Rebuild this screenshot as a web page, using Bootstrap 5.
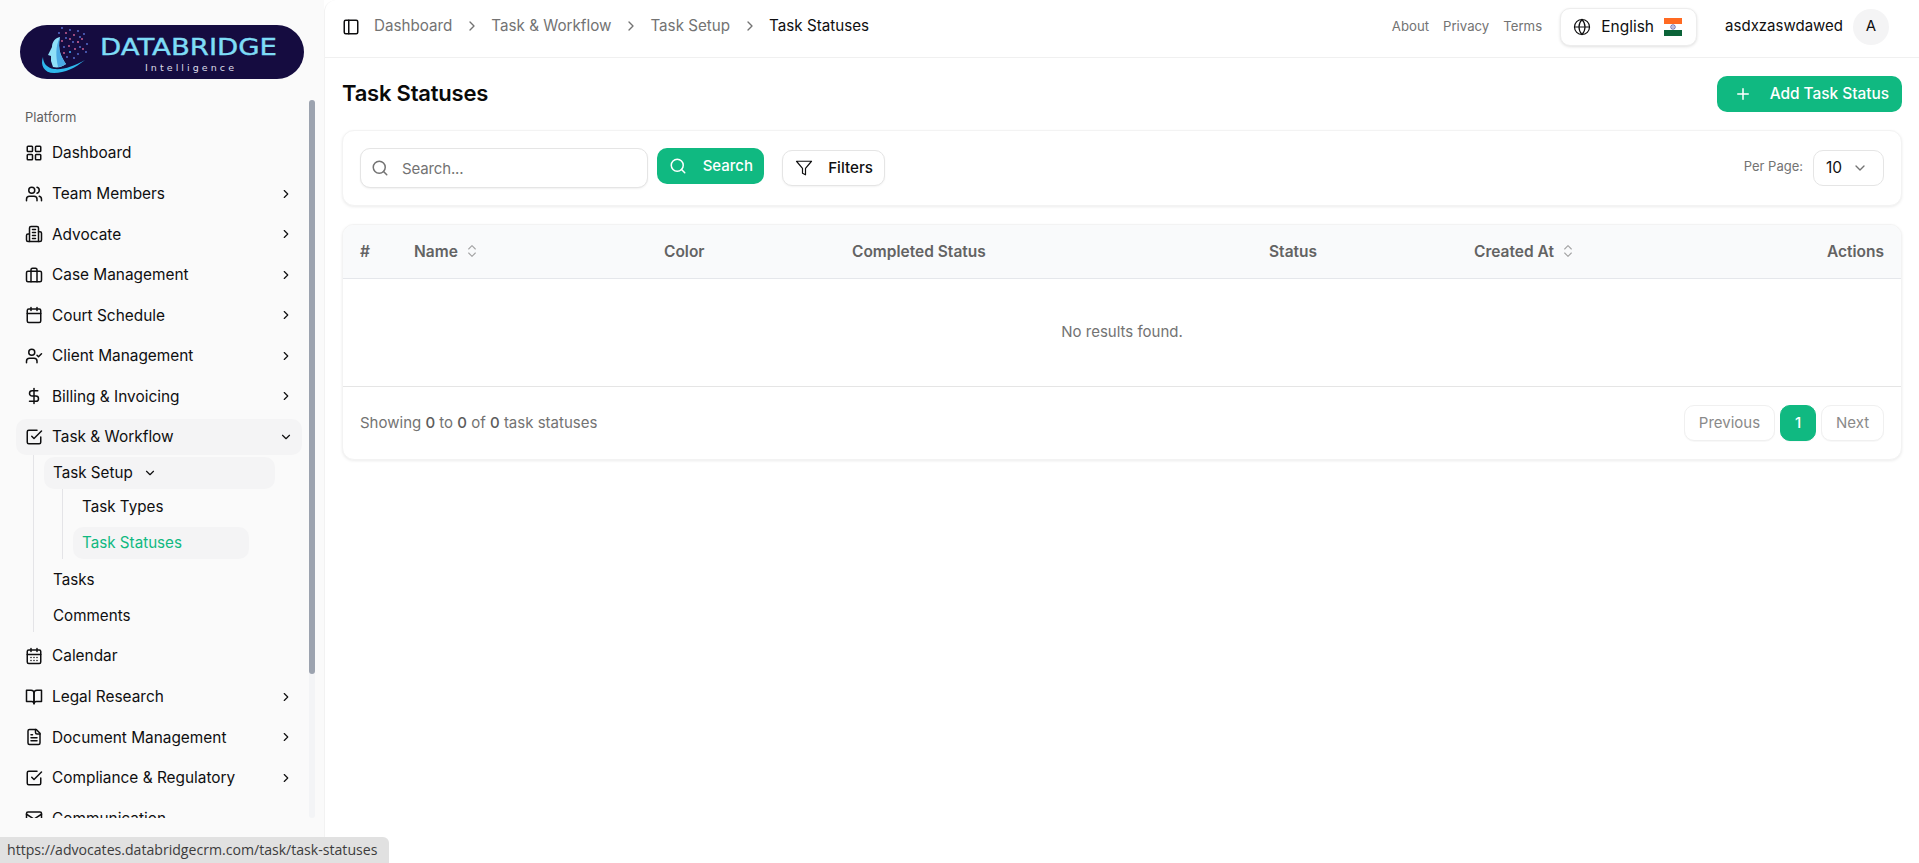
<!doctype html>
<html lang="en">
<head>
<meta charset="utf-8">
<title>Task Statuses</title>
<link href="https://cdn.jsdelivr.net/npm/bootstrap@5.3.0/dist/css/bootstrap.min.css" rel="stylesheet">
<style>
:root{--green:#10b981;--ink:#0f0f10;--mute:#737373;--line:#e8e8e8}
html,body{height:100%;overflow:hidden}
body{font-family:Inter,"Liberation Sans",sans-serif;font-size:15.4px;color:var(--ink);background:#fff}
.ic{width:18px;height:18px;fill:none;stroke:currentColor;stroke-width:2;stroke-linecap:round;stroke-linejoin:round;flex:none}
.ic-sm{width:14px;height:14px}
.ic-md{width:16px;height:16px}
.ic-thin{stroke-width:1.6}
.side{width:324px;height:100vh;background:#fafafa;flex:none}
.logo-wrap{height:100px;padding:25px 20px 0}
.logo-svg{display:block;width:284px;height:54px}
.nav-zone{height:718px;padding-left:16px}
.nav-list{width:286px;overflow:hidden;margin-right:7px}
.plat{font-size:13px;color:#5f5f5f;height:35px;padding:9px 0 0 9px;line-height:17px}
.s-row{height:36px;border-radius:10px;padding:0 9px 0 9px;margin-bottom:4.57px;gap:9px;color:var(--ink);text-decoration:none;cursor:pointer;font-size:15.4px}
.s-row .chev{margin-left:auto}
.s-open{background:#f4f4f5;margin-bottom:0}
.tree{margin:0 0 6px 17px;border-left:1px solid #e4e4e7;padding:2px 0 0 10px;width:242px}
.tree-in{margin:0 0 0 18px;border-left:1px solid #e4e4e7;padding:2px 0 0 10px;width:213px;margin-bottom:5px}
.t-row{height:32px;border-radius:10px;padding:0 9px;color:var(--ink);text-decoration:none;margin-bottom:4px;gap:10px;font-size:15.2px}
.t-open{background:#f4f4f5;width:231px;margin-bottom:0}
.t-act{background:#f4f4f5;color:var(--green);width:176px;margin-bottom:0}
.t-first{margin-bottom:4px}
.t-last{margin-bottom:2px}
.track{width:6px;height:718px;background:#f3f4f6;border-radius:3px}
.thumb{width:6px;height:574px;background:#9ca3af;border-radius:3px}
.main-col{min-width:0;border-left:1px solid #f2f2f2;border-top-left-radius:12px}
.topbar{height:58px;border-bottom:1px solid #f0f0f0;padding:0 30px 4px 17px;font-size:15.2px}
.crumb-wrap{margin-left:14px}
.crumb{color:var(--mute);text-decoration:none}
.crumb-end{color:var(--ink)}
.crumb-sep{color:#737373;margin:0 11.5px}
.tlink{font-size:13.2px;color:var(--mute);text-decoration:none}
.tlinks{gap:14px}
.lang{height:38px;width:137px;background:#fff;border:1px solid #ededed;border-radius:10px;box-shadow:0 1px 3px rgba(0,0,0,.12);padding:0 14px 0 12px;margin:0 28px 0 18px;font-size:15.5px}
.uname{font-size:15px;color:var(--ink)}
.avatar{width:36px;height:36px;border-radius:50%;background:#f4f4f5;font-size:15px;margin-left:10px}
.pane{padding:18px 17px 0 17px}
.ttl{font-size:22px;font-weight:600;margin:0;padding-bottom:2px;letter-spacing:-.01em;color:#0a0a0a}
.btn-g{background:var(--green);border:0;color:#fff;border-radius:10px;font-size:15.4px;font-weight:500;display:inline-flex;align-items:center}
.btn-g:hover{background:var(--green);color:#fff}
.btn-add{height:36px;width:185px;padding:0 13px 0 17px;justify-content:space-between}
.btn-srch{height:36px;width:107px;padding:0 11px 0 12px;justify-content:space-between;font-size:15px;margin-left:9px}
.panel{border:1px solid #f3f3f3;border-radius:12px;box-shadow:0 1px 3px rgba(0,0,0,.08)}
.filter-card{margin-top:18px;height:76px;padding:17px 17px 17px 17px}
.srch-box{width:288px;height:40px}
.srch-box .form-control{height:40px;border:1px solid #e5e5e5;border-radius:10px;box-shadow:0 1px 2px rgba(0,0,0,.06);padding-left:41px;font-size:15px;letter-spacing:-.01em;color:var(--ink)}
.srch-box .form-control::placeholder{color:var(--mute)}
.srch-ic{position:absolute;left:11px;top:11px;color:#737373}
.btn-flt{height:36px;width:103px;margin:2px 0 0 18px;background:#fff;border:1px solid #e5e5e5;border-radius:10px;box-shadow:0 1px 2px rgba(0,0,0,.05);font-size:15.2px;font-weight:500;color:var(--ink);padding:0 11px 0 12px;display:inline-flex;align-items:center;justify-content:space-between}
.perlab{font-size:13px;color:var(--mute);margin-right:10px}
.per-sel{height:36px;width:71px;margin-top:2px;border:1px solid #e5e5e5;border-radius:10px;padding:0 15px 0 12px;font-size:15.5px}
.per-sel .ic{color:#737373}
.table-card{margin-top:18px;height:236px;overflow:hidden}
.tbl{table-layout:fixed;width:100%;margin:0;--bs-table-bg:transparent}
.tbl th{background:#f9fafb;height:53px;padding:0 17px;font-size:15.5px;font-weight:600;color:#636363;border-bottom:1px solid #e5e7eb;vertical-align:middle;white-space:nowrap}
.tbl td{height:108px;text-align:center;vertical-align:middle;color:var(--mute);font-size:15px;border-bottom:1px solid #e5e5e5;padding:0}
.sort{color:#a3a3a3;margin-left:6px;vertical-align:-2px}
.c1{width:54px}.c2{width:250px}.c3{width:188px}.c4{width:417px}.c5{width:205px}.c6{width:auto}
.tfoot{height:73px;padding:0 17px 0 17px;font-size:15px;color:var(--mute)}
.tfoot-txt{padding-top:1px}
.tfoot b{font-weight:500;color:#5c5c5c}
.pg{height:36px;border:1px solid #f0f0f0;border-radius:10px;color:#8a8a8a;font-size:15px;background:#fff;box-shadow:0 1px 1px rgba(0,0,0,.03)}
.pg-prev{width:91px;margin-right:5px}
.pg-next{width:63px;margin-left:5px}
.pg-on{width:36px;background:var(--green);border-color:var(--green);color:#fff;font-weight:500}
.statusbar{position:fixed;left:0;bottom:0;width:389px;height:26px;background:#e1e1e1;border-top-right-radius:6px;font-family:"Open Sans","Liberation Sans",sans-serif;font-size:14.1px;color:#3c3c3c;padding:0 0 0 7px;line-height:26px;white-space:nowrap}
</style>
</head>
<body class="d-flex">
<svg width="0" height="0" class="position-absolute">
<defs>
<symbol id="i-grid" viewBox="0 0 24 24"><rect x="3" y="3" width="7" height="7" rx="1"/><rect x="14" y="3" width="7" height="7" rx="1"/><rect x="14" y="14" width="7" height="7" rx="1"/><rect x="3" y="14" width="7" height="7" rx="1"/></symbol>
<symbol id="i-users" viewBox="0 0 24 24"><path d="M16 21v-2a4 4 0 0 0-4-4H6a4 4 0 0 0-4 4v2"/><circle cx="9" cy="7" r="4"/><path d="M22 21v-2a4 4 0 0 0-3-3.87"/><path d="M16 3.13a4 4 0 0 1 0 7.75"/></symbol>
<symbol id="i-bld" viewBox="0 0 24 24"><path d="M6 22V4a2 2 0 0 1 2-2h8a2 2 0 0 1 2 2v18Z"/><path d="M6 12H4a2 2 0 0 0-2 2v6a2 2 0 0 0 2 2h2"/><path d="M18 9h2a2 2 0 0 1 2 2v9a2 2 0 0 1-2 2h-2"/><path d="M10 6h4M10 10h4M10 14h4M10 18h4"/></symbol>
<symbol id="i-brief" viewBox="0 0 24 24"><rect x="2" y="7" width="20" height="14" rx="2"/><path d="M16 21V5a2 2 0 0 0-2-2h-4a2 2 0 0 0-2 2v16"/></symbol>
<symbol id="i-cal" viewBox="0 0 24 24"><path d="M8 2v4M16 2v4"/><rect x="3" y="4" width="18" height="18" rx="2"/><path d="M3 10h18"/></symbol>
<symbol id="i-ucheck" viewBox="0 0 24 24"><path d="M16 21v-2a4 4 0 0 0-4-4H6a4 4 0 0 0-4 4v2"/><circle cx="9" cy="7" r="4"/><path d="m16 11 2 2 4-4"/></symbol>
<symbol id="i-dollar" viewBox="0 0 24 24"><path d="M12 2v20"/><path d="M17 5H9.5a3.5 3.5 0 0 0 0 7h5a3.5 3.5 0 0 1 0 7H6"/></symbol>
<symbol id="i-check" viewBox="0 0 24 24"><path d="m9 11 3 3L22 4"/><path d="M21 12v7a2 2 0 0 1-2 2H5a2 2 0 0 1-2-2V5a2 2 0 0 1 2-2h11"/></symbol>
<symbol id="i-days" viewBox="0 0 24 24"><path d="M8 2v4M16 2v4"/><rect x="3" y="4" width="18" height="18" rx="2"/><path d="M3 10h18M8 14h.01M12 14h.01M16 14h.01M8 18h.01M12 18h.01M16 18h.01"/></symbol>
<symbol id="i-book" viewBox="0 0 24 24"><path d="M2 3h6a4 4 0 0 1 4 4v14a3 3 0 0 0-3-3H2z"/><path d="M22 3h-6a4 4 0 0 0-4 4v14a3 3 0 0 1 3-3h7z"/></symbol>
<symbol id="i-file" viewBox="0 0 24 24"><path d="M15 2H6a2 2 0 0 0-2 2v16a2 2 0 0 0 2 2h12a2 2 0 0 0 2-2V7Z"/><path d="M14 2v4a2 2 0 0 0 2 2h4"/><path d="M10 9H8M16 13H8M16 17H8"/></symbol>
<symbol id="i-mail" viewBox="0 0 24 24"><rect x="2" y="4" width="20" height="16" rx="2"/><path d="m22 7-8.97 5.7a1.94 1.94 0 0 1-2.06 0L2 7"/></symbol>
<symbol id="i-right" viewBox="0 0 24 24"><path d="m9 18 6-6-6-6"/></symbol>
<symbol id="i-down" viewBox="0 0 24 24"><path d="m6 9 6 6 6-6"/></symbol>
<symbol id="i-panel" viewBox="0 0 24 24"><rect x="3" y="3" width="18" height="18" rx="2"/><path d="M9 3v18"/></symbol>
<symbol id="i-search" viewBox="0 0 24 24"><circle cx="11" cy="11" r="8"/><path d="m21 21-4.3-4.3"/></symbol>
<symbol id="i-funnel" viewBox="0 0 24 24"><path d="M22 3H2l8 9.46V19l4 2v-8.54L22 3z"/></symbol>
<symbol id="i-globe" viewBox="0 0 24 24"><circle cx="12" cy="12" r="10"/><path d="M12 2a14.5 14.5 0 0 0 0 20 14.5 14.5 0 0 0 0-20"/><path d="M2 12h20"/></symbol>
<symbol id="i-plus" viewBox="0 0 24 24"><path d="M5 12h14M12 5v14"/></symbol>
<symbol id="i-sort" viewBox="0 0 24 24"><path d="m7 15 5 5 5-5M7 9l5-5 5 5"/></symbol>
</defs>
</svg>

<aside class="side d-flex flex-column">
  <div class="logo-wrap">
    <svg class="logo-svg" viewBox="0 0 284 54" role="img" aria-label="Databridge Intelligence logo">
      <rect width="284" height="54" rx="27" fill="#150c40"/>
      <path d="M23 32C20 40 24 48 34 48 45 48 55 43 65 35 54 41 44 45 34 44 27 43 23 38 23 32Z" fill="#2fb8ec"/>
      <path d="M40 12C35 13 32 17 32 22L28 30 31 31 31 36 33 42C38 43 42 42 46 39 42 33 37 25 40 12Z" fill="#8fe0f8"/>
      <path d="M40 12C37 25 42 33 46 39 43 41 40 42 38 42 36 32 35 22 40 12Z" fill="#4aa9e4"/>
      <g fill="#5d76d8">
        <circle cx="42" cy="3" r=".9"/><circle cx="50" cy="5" r=".9"/><circle cx="58" cy="6" r=".9"/><circle cx="64" cy="9" r=".9"/><circle cx="39" cy="8" r=".9"/><circle cx="60" cy="12" r=".9"/><circle cx="46" cy="13" r=".9"/><circle cx="53" cy="17" r=".9"/><circle cx="67" cy="19" r=".9"/><circle cx="44" cy="22" r=".9"/><circle cx="60" cy="22" r=".9"/><circle cx="50" cy="27" r="1.1" fill="#3fa8f0"/><circle cx="58" cy="29" r=".9"/><circle cx="66" cy="27" r=".9"/><circle cx="47" cy="32" r=".9"/><circle cx="54" cy="33" r=".9"/>
      </g>
      <g fill="#d9689a">
        <circle cx="46" cy="8" r=".9"/><circle cx="54" cy="10" r=".9"/><circle cx="42" cy="16" r=".9"/><circle cx="50" cy="14" r=".9"/><circle cx="58" cy="17" r="1"/><circle cx="49" cy="21" r=".9"/><circle cx="55" cy="24" r=".9"/><circle cx="63" cy="24" r=".9"/><circle cx="44" cy="28" r=".9"/><circle cx="62" cy="14" r=".9"/>
      </g>
      <text x="80" y="30" font-family="'DejaVu Sans',sans-serif" font-size="23" stroke="#7edcf6" stroke-width=".4" fill="#7edcf6" textLength="177" lengthAdjust="spacingAndGlyphs">DATABRIDGE</text>
      <text x="125" y="46" font-family="'DejaVu Sans',sans-serif" font-size="9.5" fill="#dcdce8" textLength="89" lengthAdjust="spacing">Intelligence</text>
    </svg>
  </div>
  <div class="nav-zone d-flex">
    <nav class="nav-list">
      <div class="plat">Platform</div>
      <a class="s-row d-flex align-items-center"><svg class="ic"><use href="#i-grid"/></svg>Dashboard</a>
      <a class="s-row d-flex align-items-center"><svg class="ic"><use href="#i-users"/></svg>Team Members<svg class="ic ic-sm chev"><use href="#i-right"/></svg></a>
      <a class="s-row d-flex align-items-center"><svg class="ic"><use href="#i-bld"/></svg>Advocate<svg class="ic ic-sm chev"><use href="#i-right"/></svg></a>
      <a class="s-row d-flex align-items-center"><svg class="ic"><use href="#i-brief"/></svg>Case Management<svg class="ic ic-sm chev"><use href="#i-right"/></svg></a>
      <a class="s-row d-flex align-items-center"><svg class="ic"><use href="#i-cal"/></svg>Court Schedule<svg class="ic ic-sm chev"><use href="#i-right"/></svg></a>
      <a class="s-row d-flex align-items-center"><svg class="ic"><use href="#i-ucheck"/></svg>Client Management<svg class="ic ic-sm chev"><use href="#i-right"/></svg></a>
      <a class="s-row d-flex align-items-center"><svg class="ic"><use href="#i-dollar"/></svg>Billing &amp; Invoicing<svg class="ic ic-sm chev"><use href="#i-right"/></svg></a>
      <a class="s-row s-open d-flex align-items-center"><svg class="ic"><use href="#i-check"/></svg>Task &amp; Workflow<svg class="ic ic-sm chev"><use href="#i-down"/></svg></a>
      <div class="tree">
        <a class="t-row t-open d-flex align-items-center">Task Setup<svg class="ic ic-sm"><use href="#i-down"/></svg></a>
        <div class="tree-in">
          <a class="t-row t-first d-flex align-items-center">Task Types</a>
          <a class="t-row t-act d-flex align-items-center">Task Statuses</a>
        </div>
        <a class="t-row d-flex align-items-center">Tasks</a>
        <a class="t-row t-last d-flex align-items-center">Comments</a>
      </div>
      <a class="s-row d-flex align-items-center"><svg class="ic"><use href="#i-days"/></svg>Calendar</a>
      <a class="s-row d-flex align-items-center"><svg class="ic"><use href="#i-book"/></svg>Legal Research<svg class="ic ic-sm chev"><use href="#i-right"/></svg></a>
      <a class="s-row d-flex align-items-center"><svg class="ic"><use href="#i-file"/></svg>Document Management<svg class="ic ic-sm chev"><use href="#i-right"/></svg></a>
      <a class="s-row d-flex align-items-center"><svg class="ic"><use href="#i-check"/></svg>Compliance &amp; Regulatory<svg class="ic ic-sm chev"><use href="#i-right"/></svg></a>
      <a class="s-row d-flex align-items-center"><svg class="ic"><use href="#i-mail"/></svg>Communication</a>
    </nav>
    <div class="track"><div class="thumb"></div></div>
  </div>
</aside>

<div class="main-col flex-grow-1 d-flex flex-column">
  <header class="topbar d-flex align-items-center">
    <svg class="ic"><use href="#i-panel"/></svg>
    <nav class="d-flex align-items-center crumb-wrap">
      <a class="crumb">Dashboard</a><svg class="ic ic-md crumb-sep"><use href="#i-right"/></svg>
      <a class="crumb">Task &amp; Workflow</a><svg class="ic ic-md crumb-sep"><use href="#i-right"/></svg>
      <a class="crumb">Task Setup</a><svg class="ic ic-md crumb-sep"><use href="#i-right"/></svg>
      <span class="crumb-end">Task Statuses</span>
    </nav>
    <div class="ms-auto d-flex align-items-center">
      <div class="d-flex tlinks"><a class="tlink">About</a><a class="tlink">Privacy</a><a class="tlink">Terms</a></div>
      <div class="lang d-flex align-items-center justify-content-between">
        <svg class="ic ic-thin"><use href="#i-globe"/></svg>
        <span>English</span>
        <svg width="18" height="18" viewBox="0 0 18 18" aria-label="India flag"><rect width="18" height="6" fill="#ff6a22"/><rect y="6" width="18" height="6" fill="#fff"/><rect y="12" width="18" height="6" fill="#0b6338"/><circle cx="9" cy="9" r="2.2" fill="none" stroke="#4a4aa0" stroke-width=".9"/><circle cx="9" cy="9" r=".7" fill="#4a4aa0"/></svg>
      </div>
      <span class="uname">asdxzaswdawed</span>
      <span class="avatar d-flex align-items-center justify-content-center">A</span>
    </div>
  </header>

  <main class="pane">
    <div class="d-flex align-items-center justify-content-between">
      <h1 class="ttl">Task Statuses</h1>
      <button class="btn btn-g btn-add"><svg class="ic"><use href="#i-plus"/></svg>Add Task Status</button>
    </div>

    <div class="card panel filter-card d-flex flex-row align-items-start">
      <div class="srch-box position-relative">
        <svg class="ic srch-ic"><use href="#i-search"/></svg>
        <input class="form-control" placeholder="Search...">
      </div>
      <button class="btn btn-g btn-srch"><svg class="ic"><use href="#i-search"/></svg>Search</button>
      <button class="btn btn-flt"><svg class="ic ic-thin"><use href="#i-funnel"/></svg>Filters</button>
      <div class="ms-auto d-flex align-items-center">
        <span class="perlab">Per Page:</span>
        <div class="per-sel d-flex align-items-center justify-content-between"><span>10</span><svg class="ic ic-md"><use href="#i-down"/></svg></div>
      </div>
    </div>

    <div class="card panel table-card">
      <table class="table tbl">
        <colgroup><col class="c1"><col class="c2"><col class="c3"><col class="c4"><col class="c5"><col class="c6"><col></colgroup>
        <thead>
          <tr>
            <th>#</th>
            <th>Name<svg class="ic ic-md ic-thin sort"><use href="#i-sort"/></svg></th>
            <th>Color</th>
            <th>Completed Status</th>
            <th>Status</th>
            <th>Created At<svg class="ic ic-md ic-thin sort"><use href="#i-sort"/></svg></th>
            <th class="text-end">Actions</th>
          </tr>
        </thead>
        <tbody><tr><td colspan="7">No results found.</td></tr></tbody>
      </table>
      <div class="tfoot d-flex align-items-center justify-content-between">
        <span class="tfoot-txt">Showing <b>0</b> to <b>0</b> of <b>0</b> task statuses</span>
        <div class="d-flex">
          <span class="pg pg-prev d-flex align-items-center justify-content-center">Previous</span>
          <span class="pg pg-on d-flex align-items-center justify-content-center">1</span>
          <span class="pg pg-next d-flex align-items-center justify-content-center">Next</span>
        </div>
      </div>
    </div>
  </main>
</div>

<div class="statusbar">https://advocates.databridgecrm.com/task/task-statuses</div>
<script src="https://cdn.jsdelivr.net/npm/bootstrap@5.3.0/dist/js/bootstrap.bundle.min.js"></script>
</body>
</html>
